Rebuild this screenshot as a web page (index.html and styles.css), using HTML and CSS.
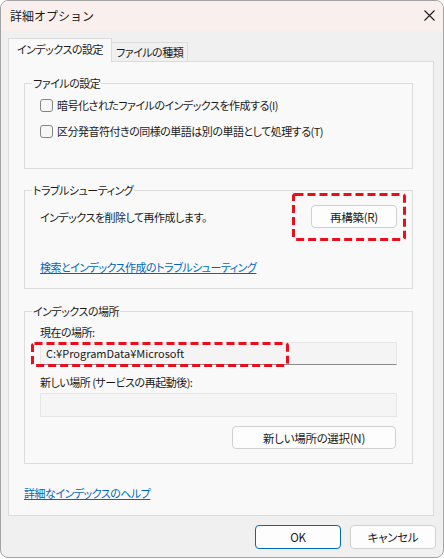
FILE: index.html
```html
<!DOCTYPE html>
<html lang="ja">
<head>
    <meta charset="UTF-8">
    <meta name="viewport" content="width=device-width, initial-scale=1.0">
    <title>詳細オプション</title>
    <link rel="stylesheet" href="styles.css">
</head>
<body>

    <div class="window">
        <div class="titlebar">
            <span class="title">詳細オプション</span>
            <svg class="close" width="11" height="11" viewBox="0 0 11 11">
                <path d="M0.5 0.5 L10.5 10.5 M10.5 0.5 L0.5 10.5" stroke="#1a1a1a" stroke-width="1.1" fill="none"/>
            </svg>
        </div>

        <div class="tabs">
            <div class="tab active">インデックスの設定</div>
            <div class="tab">ファイルの種類</div>
        </div>

        <div class="panel">
            <fieldset class="group group-files">
                <legend>ファイルの設定</legend>
                <label class="check"><span class="box"></span>暗号化されたファイルのインデックスを作成する(I)</label>
                <label class="check"><span class="box"></span>区分発音符付きの同様の単語は別の単語として処理する(T)</label>
            </fieldset>

            <fieldset class="group group-trouble">
                <legend>トラブルシューティング</legend>
                <div class="rebuild-row">
                    <span>インデックスを削除して再作成します。</span>
                    <span class="mark">
                        <button class="btn rebuild">再構築(R)</button>
                        <svg class="mark-box mark-rebuild" width="114" height="48">
                            <rect x="1.5" y="1.5" width="111" height="45" rx="2"/>
                        </svg>
                    </span>
                </div>
                <a class="link trouble-link" href="#">検索とインデックス作成のトラブルシューティング</a>
            </fieldset>

            <fieldset class="group group-location">
                <legend>インデックスの場所</legend>
                <div class="field-label">現在の場所:</div>
                <div class="mark">
                    <div class="field current">C:¥ProgramData¥Microsoft</div>
                    <svg class="mark-box mark-path" width="258" height="25">
                        <rect x="1.5" y="1.5" width="255" height="22" rx="2"/>
                    </svg>
                </div>
                <div class="field-label second">新しい場所 (サービスの再起動後):</div>
                <div class="field empty"></div>
                <div class="select-row">
                    <button class="btn select">新しい場所の選択(N)</button>
                </div>
            </fieldset>

            <a class="link help" href="#">詳細なインデックスのヘルプ</a>
        </div>

        <div class="footer">
            <button class="btn primary">OK</button>
            <button class="btn">キャンセル</button>
        </div>
    </div>

</body>
</html>
```

FILE: styles.css
```css
body {
    margin: 0;
    background: #ffffff;
    font-family: 'Noto Sans CJK JP', 'Noto Sans', sans-serif;
    font-size: 11px;
    letter-spacing: -0.5px;
    color: #1a1a1a;
    font-feature-settings: "palt";
}

.window {
    width: 444px;
    height: 558px;
    box-sizing: border-box;
    border: 1px solid #a3a3a3;
    border-radius: 8px;
    background: #f0f0f0;
    overflow: hidden;
}

.titlebar {
    height: 30px;
    display: flex;
    align-items: center;
    padding: 0 8px 0 9px;
    background: #f9f0ed;
}

.title {
    font-size: 12px;
    letter-spacing: 0;
    line-height: 16px;
    font-feature-settings: normal;
}

.close {
    margin-left: auto;
    margin-bottom: 1px;
}

.tabs {
    display: flex;
    align-items: flex-end;
    height: 22px;
    margin: 8px 0 0 7px;
}

.tab {
    height: 18px;
    line-height: 18px;
    padding: 0 4px;
    border: 1px solid #dcdcdc;
    border-bottom: none;
    background: #f0f0f0;
    margin-left: -1px;
}

.tab.active {
    position: relative;
    z-index: 1;
    height: 23px;
    line-height: 21px;
    margin: 0 0 -1px 0;
    padding: 0 8px;
    background: #f9f9f9;
}

.panel {
    height: 455px;
    box-sizing: border-box;
    margin: 0 9px 0 7px;
    padding: 13px 20px 0 15px;
    border: 1px solid #dcdcdc;
    background: #f9f9f9;
}

.group {
    margin: 0;
    padding: 0 15px;
    min-width: 0;
    border: 1px solid #dcdcdc;
}

.group legend {
    margin-left: -8px;
    padding: 0 1px;
    line-height: 16px;
}

.group-files {
    padding-top: 1px;
    padding-bottom: 24px;
}

.check {
    display: flex;
    align-items: center;
    gap: 4px;
    height: 26px;
}

.box {
    width: 11px;
    height: 11px;
    border: 1px solid #858585;
    border-radius: 3px;
    background: #f6f6f6;
}

.group-trouble {
    margin-top: 13px;
    padding-bottom: 13px;
}

.rebuild-row {
    display: flex;
    justify-content: space-between;
    align-items: center;
    margin-top: 7px;
}

.link {
    display: block;
    width: max-content;
    line-height: 16px;
    color: #0067c0;
    text-decoration: underline;
}

.trouble-link {
    margin-top: 31px;
}

.group-location {
    margin-top: 14px;
    padding-bottom: 14px;
}

.field-label {
    margin-top: 5px;
    line-height: 16px;
}

.field-label.second {
    margin-top: 9px;
}

.field {
    box-sizing: border-box;
    border: 1px solid #e6e6e6;
}

.field.current {
    height: 23px;
    margin-top: 2px;
    padding-left: 5px;
    line-height: 21px;
    letter-spacing: 0;
    background: #f4f4f4;
    border-bottom-color: #8c8c8c;
}

.field.empty {
    height: 24px;
    margin-top: 3px;
    background: #f5f5f5;
}

.select-row {
    display: flex;
    justify-content: flex-end;
    margin-top: 9px;
    padding-right: 1px;
}

.help {
    margin: 21px 0 0 0;
}

.btn {
    box-sizing: border-box;
    height: 23px;
    padding: 0;
    border: 1px solid #d0d0d0;
    border-radius: 4px;
    background: #fdfdfd;
    font-family: inherit;
    font-size: 11.5px;
    letter-spacing: -0.3px;
    color: #1a1a1a;
    font-feature-settings: "palt";
}

.btn.rebuild {
    width: 86px;
}

.btn.select {
    width: 164px;
}

.footer {
    display: flex;
    justify-content: flex-end;
    gap: 9px;
    padding: 9px 7px 0 0;
}

.footer .btn {
    width: 86px;
    height: 24px;
}

.btn.primary {
    border-color: #0067c0;
}

.mark {
    position: relative;
    display: block;
}

.rebuild-row .mark {
    display: inline-block;
    height: 23px;
}

.mark-box {
    position: absolute;
    fill: none;
    stroke: #ea0d1c;
    stroke-width: 3;
    stroke-dasharray: 8 4;
}

.mark-rebuild {
    left: -19px;
    top: -12px;
}

.mark-path {
    left: -9px;
    top: 0;
}
```
